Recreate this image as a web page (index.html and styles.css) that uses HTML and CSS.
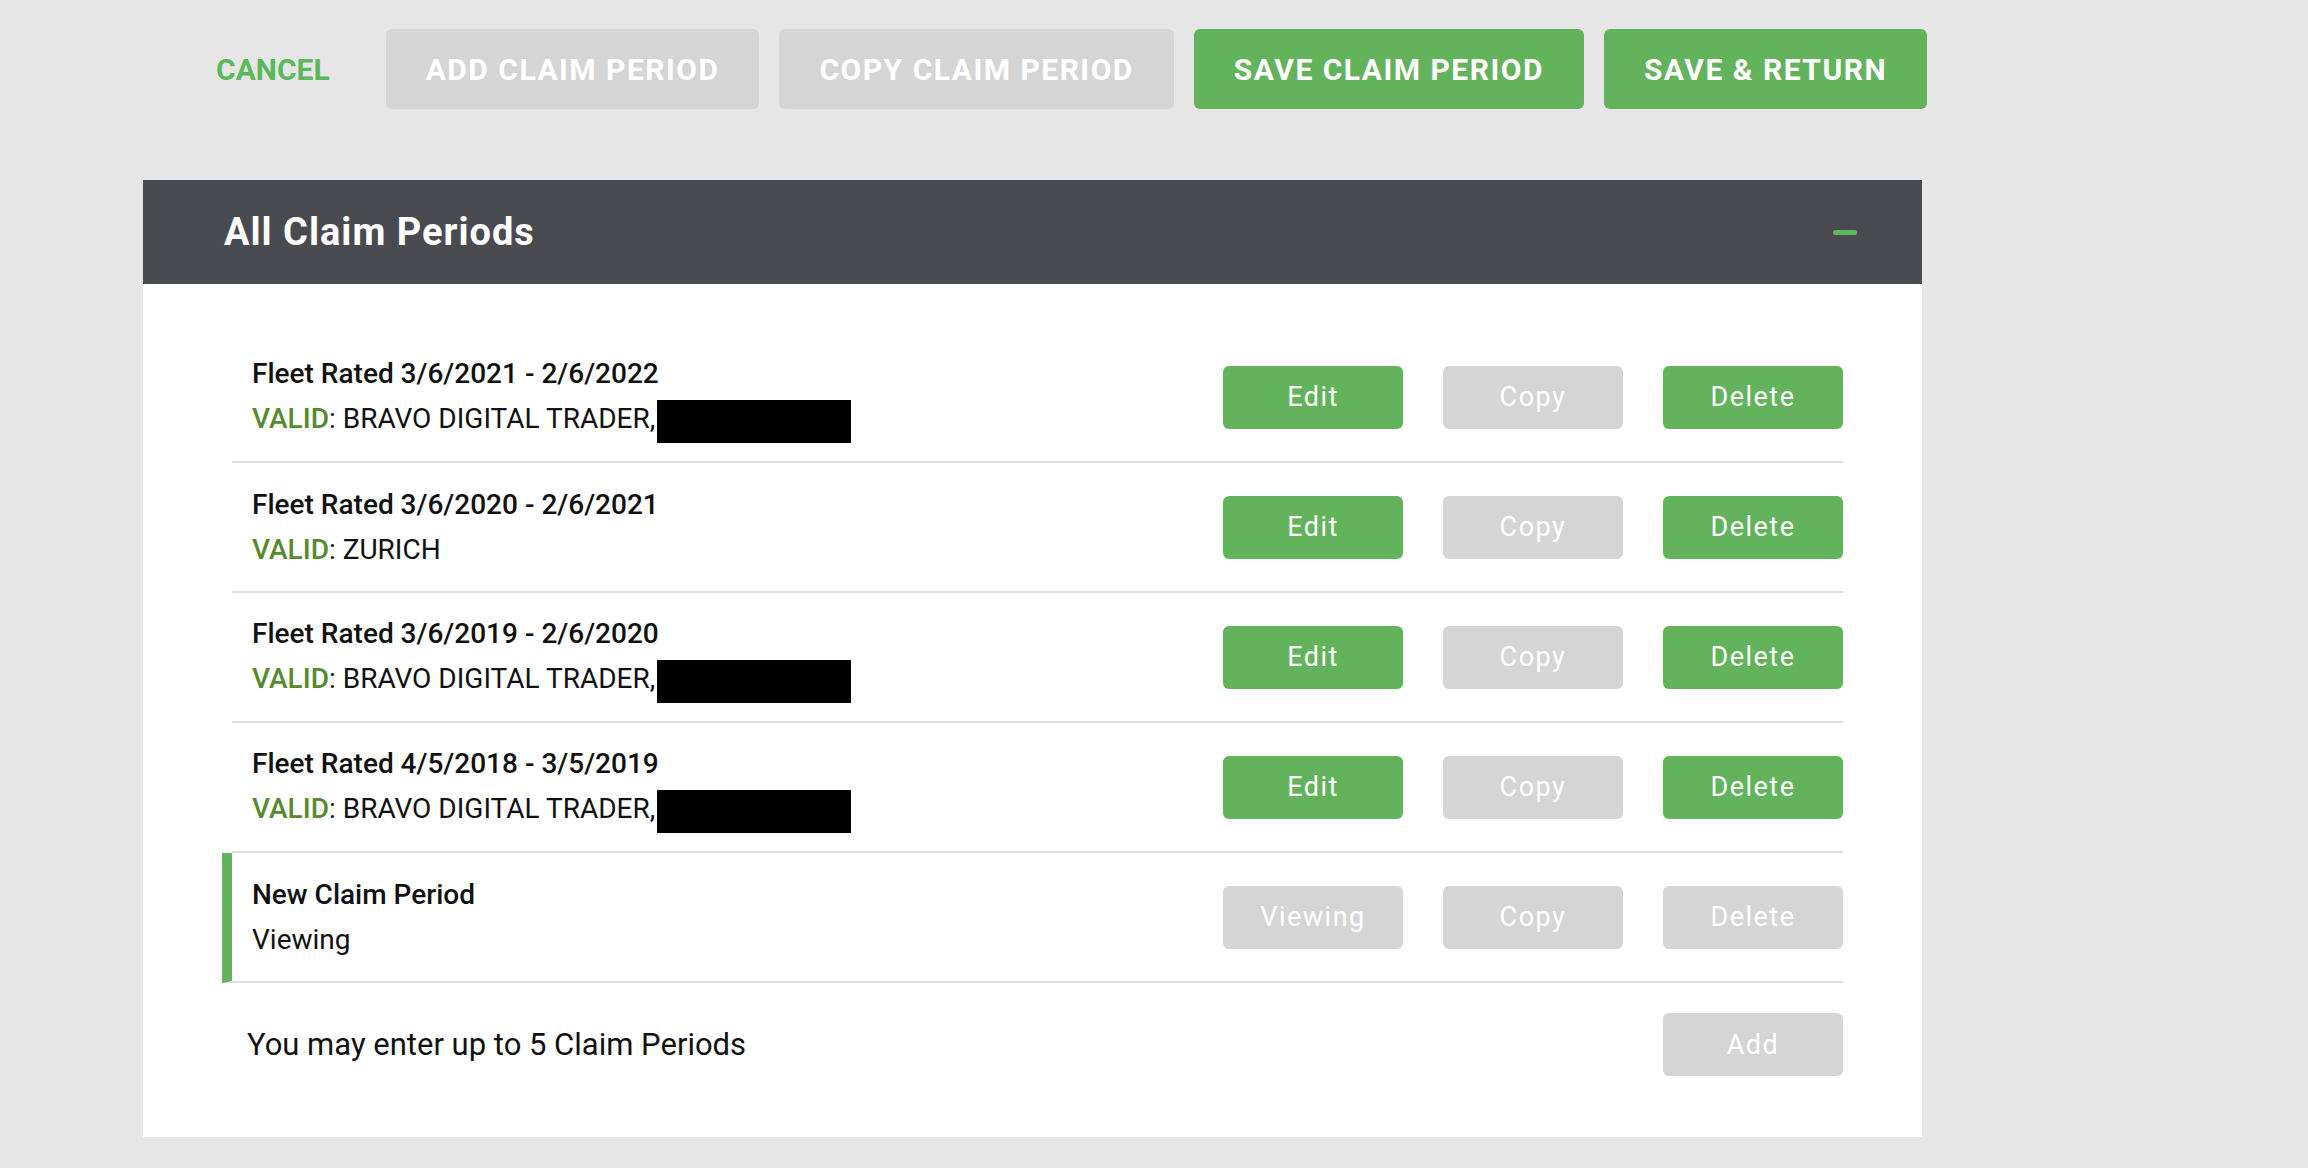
FILE: index.html
```html
<!DOCTYPE html>
<html>

	<head>
		<meta charset="UTF-8">
		<title>Claim Periods</title>
		<link rel="stylesheet" href="styles.css">
	</head>

	<body>
		<nav class="toolbar">
			<button class="link-btn">CANCEL</button>
			<button class="bar-btn off">ADD CLAIM PERIOD</button>
			<button class="bar-btn off">COPY CLAIM PERIOD</button>
			<button class="bar-btn">SAVE CLAIM PERIOD</button>
			<button class="bar-btn">SAVE &amp; RETURN</button>
		</nav>

		<section class="panel">
			<header class="panel-head">
				<h1>All Claim Periods</h1>
				<span class="collapse"></span>
			</header>
			<div class="panel-body">
				<ul class="periods">
					<li class="period">
						<div class="info">
							<div class="name">Fleet Rated 3/6/2021 - 2/6/2022</div>
							<div class="status"><span class="valid">VALID</span>: BRAVO DIGITAL TRADER,<span class="redact"></span></div>
						</div>
						<div class="actions">
							<button class="btn">Edit</button>
							<button class="btn off">Copy</button>
							<button class="btn">Delete</button>
						</div>
					</li>
					<li class="period">
						<div class="info">
							<div class="name">Fleet Rated 3/6/2020 - 2/6/2021</div>
							<div class="status"><span class="valid">VALID</span>: ZURICH</div>
						</div>
						<div class="actions">
							<button class="btn">Edit</button>
							<button class="btn off">Copy</button>
							<button class="btn">Delete</button>
						</div>
					</li>
					<li class="period">
						<div class="info">
							<div class="name">Fleet Rated 3/6/2019 - 2/6/2020</div>
							<div class="status"><span class="valid">VALID</span>: BRAVO DIGITAL TRADER,<span class="redact"></span></div>
						</div>
						<div class="actions">
							<button class="btn">Edit</button>
							<button class="btn off">Copy</button>
							<button class="btn">Delete</button>
						</div>
					</li>
					<li class="period">
						<div class="info">
							<div class="name">Fleet Rated 4/5/2018 - 3/5/2019</div>
							<div class="status"><span class="valid">VALID</span>: BRAVO DIGITAL TRADER,<span class="redact"></span></div>
						</div>
						<div class="actions">
							<button class="btn">Edit</button>
							<button class="btn off">Copy</button>
							<button class="btn">Delete</button>
						</div>
					</li>
					<li class="period current">
						<div class="info">
							<div class="name">New Claim Period</div>
							<div class="status">Viewing</div>
						</div>
						<div class="actions">
							<button class="btn off">Viewing</button>
							<button class="btn off">Copy</button>
							<button class="btn off">Delete</button>
						</div>
					</li>
				</ul>
				<div class="panel-foot">
					<p>You may enter up to 5 Claim Periods</p>
					<button class="btn off">Add</button>
				</div>
			</div>
		</section>
	</body>

</html>
```

FILE: styles.css
```css
body {
	margin: 0;
	background: #e6e6e6;
	font-family: Roboto, "Liberation Sans", sans-serif;
	color: #111;
}

button {
	font-family: inherit;
	border: 0;
	cursor: pointer;
}

.toolbar {
	display: flex;
	align-items: center;
	gap: 20px;
	padding: 29px 0 0 216px;
}

.link-btn {
	background: none;
	padding: 0;
	margin-right: 36px;
	color: #5cb85c;
	font-size: 30px;
	font-weight: 700;
}

.bar-btn {
	height: 80px;
	padding: 0 40px;
	border-radius: 6px;
	background: #62b35b;
	color: #fff;
	font-size: 30px;
	font-weight: 700;
	letter-spacing: 1.5px;
}

.bar-btn.off {
	background: #d5d5d5;
}

.panel {
	width: 1779px;
	margin: 71px 0 0 143px;
	background: #fff;
}

.panel-head {
	height: 104px;
	display: flex;
	align-items: center;
	justify-content: space-between;
	padding: 0 65px 0 81px;
	background: #4a4b50;
}

.panel-head h1 {
	margin: 0;
	color: #fff;
	font-size: 38px;
	font-weight: 700;
	letter-spacing: 1px;
}

.collapse {
	width: 24px;
	height: 5px;
	border-radius: 2px;
	background: #5cb85c;
}

.panel-body {
	padding: 49px 79px 61px 89px;
}

.periods {
	margin: 0;
	padding: 0;
	list-style: none;
}

.period {
	height: 128px;
	display: flex;
	align-items: center;
	justify-content: space-between;
	padding-left: 20px;
	border-bottom: 2px solid #dedede;
}

.period.current {
	margin-left: -10px;
	border-left: 10px solid #62b35b;
}

.name {
	font-size: 28px;
	font-weight: 500;
	line-height: 45px;
}

.status {
	font-size: 28px;
	line-height: 45px;
}

.valid {
	color: #568a30;
	font-weight: 500;
}

.redact {
	display: inline-block;
	width: 194px;
	height: 43px;
	margin-left: 2px;
	background: #000;
	vertical-align: middle;
}

.actions {
	display: flex;
	gap: 40px;
}

.btn {
	width: 180px;
	height: 63px;
	border-radius: 6px;
	background: #62b35b;
	color: #fff;
	font-size: 27px;
	letter-spacing: 1.5px;
}

.btn.off {
	background: #d5d5d5;
}

.panel-foot {
	display: flex;
	align-items: center;
	justify-content: space-between;
	padding: 30px 0 0 15px;
}

.panel-foot p {
	margin: 0;
	font-size: 31px;
}
```
